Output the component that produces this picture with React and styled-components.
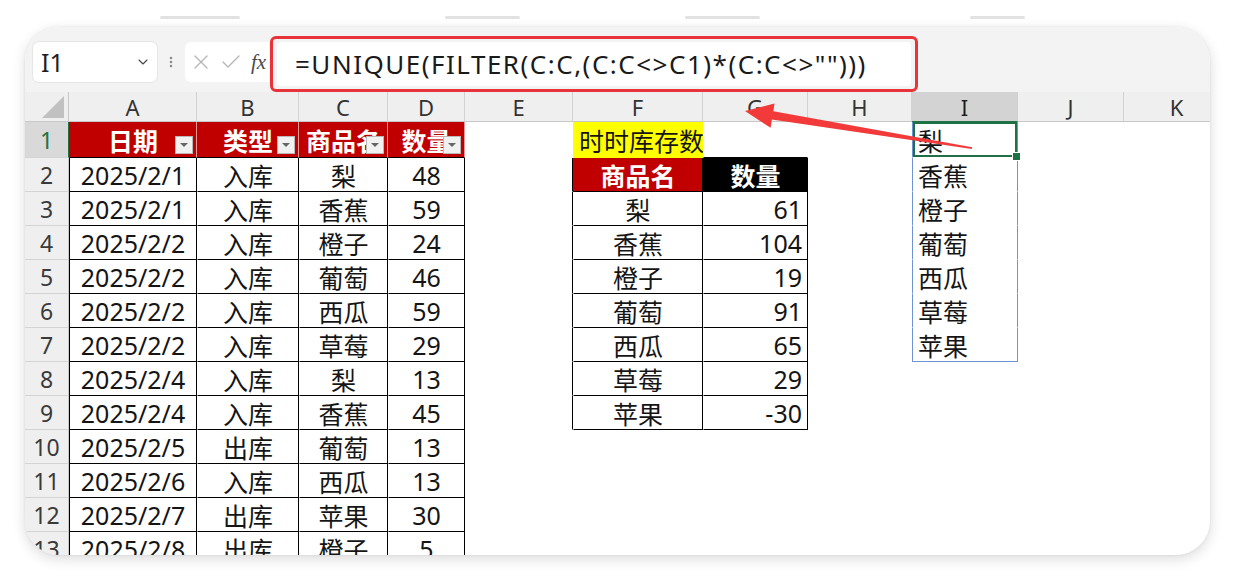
import React from 'react';
import styled, { createGlobalStyle } from 'styled-components';
import { ChevronDown, X, Check, EllipsisVertical } from 'lucide-react';

const GlobalStyle = createGlobalStyle`
  html, body {
    margin: 0;
    padding: 0;
    background: #ffffff;
  }
  body {
    font-family: "Noto Sans", "Noto Sans CJK SC", sans-serif;
  }
`;

const Page = styled.div`
  width: 1235px;
  height: 580px;
  padding: 0 25px;
  box-sizing: border-box;
`;

const TopStrip = styled.div`
  height: 27px;
  display: flex;
  align-items: flex-end;
  padding-bottom: 8px;
  box-sizing: border-box;
`;

const Fragment = styled.div`
  width: ${p => p.$w}px;
  margin-left: ${p => p.$ml}px;
  height: 3px;
  border-radius: 2px;
  background: #e2e2e2;
`;

const Card = styled.div`
  position: relative;
  width: 1185px;
  height: 528px;
  border-radius: 34px;
  overflow: hidden;
  background: #ffffff;
  box-shadow: 0 4px 14px rgba(0, 0, 0, 0.14), 0 0 3px rgba(0, 0, 0, 0.08);
  display: flex;
  flex-direction: column;
`;

const FormulaBar = styled.div`
  height: 65px;
  flex: none;
  display: flex;
  align-items: center;
  padding: 5px 8px 0;
  box-sizing: border-box;
  background: #f3f3f3;
`;

const NameBox = styled.div`
  width: 124px;
  height: 40px;
  box-sizing: border-box;
  background: #ffffff;
  border-radius: 6px;
  box-shadow: 0 0 0 1px #e6e6e6;
  display: flex;
  align-items: center;
  justify-content: space-between;
  padding: 0 6px 0 8px;
  font-size: 25px;
  color: #1f1f1f;
`;

const Dots = styled.div`
  width: 28px;
  display: flex;
  justify-content: center;
  color: #8a8a8a;
`;

const FnBox = styled.div`
  width: 84px;
  height: 40px;
  box-sizing: border-box;
  background: #ffffff;
  border-radius: 6px 0 0 6px;
  display: flex;
  align-items: center;
  gap: 6px;
  padding-left: 4px;
  color: #b4b4b4;
`;

const Fx = styled.span`
  font-family: "Liberation Serif", "DejaVu Serif", serif;
  font-style: italic;
  font-size: 21px;
  color: #4a4a4a;
  margin-left: 2px;
`;

const Highlight = styled.div`
  align-self: flex-end;
  margin-left: 1px;
  width: 648px;
  height: 56px;
  box-sizing: border-box;
  border: 3px solid #e8333a;
  border-radius: 6px;
  padding: 3px 4px;
  background: #f3f3f3;
`;

const FormulaInput = styled.div`
  height: 100%;
  box-sizing: border-box;
  background: #ffffff;
  border-radius: 4px;
  display: flex;
  align-items: center;
  padding-left: 18px;
  font-size: 26px;
  color: #1a1a1a;
  letter-spacing: 1.5px;
  white-space: pre;
`;

const Sheet = styled.div`
  flex: none;
  display: grid;
  grid-template-columns: 44px ${p => p.$cols};
  grid-template-rows: 30px 36px repeat(12, 34px);
`;

const ColHead = styled.div`
  display: flex;
  align-items: center;
  justify-content: center;
  font-size: 22px;
  color: ${p => (p.$active ? '#1f1f1f' : '#333')};
  background: ${p => (p.$active ? '#d3d3d3' : '#efefef')};
  border-right: 1px solid #d2d2d2;
  border-bottom: 1px solid ${p => (p.$active ? '#217346' : '#c8c8c8')};
  box-sizing: border-box;
`;

const Corner = styled.div`
  background: #efefef;
  border-right: 1px solid #c8c8c8;
  border-bottom: 1px solid #c8c8c8;
  box-sizing: border-box;
  display: flex;
  align-items: flex-end;
  justify-content: flex-end;
  padding: 0 4px 3px 0;
`;

const Triangle = styled.div`
  width: 0;
  height: 0;
  border-left: 22px solid transparent;
  border-bottom: 22px solid #c1c1c1;
`;

const RowHead = styled.div`
  display: flex;
  align-items: center;
  justify-content: center;
  font-size: 23px;
  color: ${p => (p.$active ? '#217346' : '#3a3a3a')};
  background: ${p => (p.$active ? '#d9d9d9' : '#efefef')};
  border-right: 1px solid ${p => (p.$active ? '#217346' : '#c8c8c8')};
  border-bottom: 1px solid #d4d4d4;
  box-sizing: border-box;
`;

const Cell = styled.div`
  position: relative;
  display: flex;
  align-items: center;
  justify-content: ${p => p.$align || 'center'};
  padding: 0 5px;
  box-sizing: border-box;
  font-size: 25px;
  white-space: nowrap;
  background: ${p => p.$bg || 'transparent'};
  color: ${p => p.$color || '#151515'};
  font-weight: ${p => (p.$bold ? 700 : 400)};
  border-left: 1px solid ${p => p.$bl || 'transparent'};
  border-right: 1px solid ${p => p.$br || 'transparent'};
  border-bottom: 1px solid ${p => p.$bb || 'transparent'};
  box-shadow: ${p => (p.$active ? 'inset 0 0 0 2px #1e7145' : 'none')};
  z-index: ${p => (p.$active ? 2 : 1)};
`;

const FilterButton = styled.span`
  position: absolute;
  right: 3px;
  bottom: 3px;
  width: 18px;
  height: 18px;
  box-sizing: border-box;
  background: #f1f1f1;
  border: 1px solid #b9b9b9;
  display: flex;
  align-items: center;
  justify-content: center;

  &::after {
    content: '';
    border-left: 4px solid transparent;
    border-right: 4px solid transparent;
    border-top: 4px solid #666;
  }
`;

const Handle = styled.span`
  position: absolute;
  right: -4px;
  bottom: -4px;
  width: 7px;
  height: 7px;
  background: #1e7145;
  border: 1px solid #ffffff;
`;

const ArrowLayer = styled.svg`
  position: absolute;
  left: 0;
  top: 0;
  width: 1185px;
  height: 528px;
  z-index: 5;
  pointer-events: none;
`;

const COLS = [
  ['A', 128], ['B', 102], ['C', 89], ['D', 77], ['E', 108], ['F', 130],
  ['G', 105], ['H', 104], ['I', 106], ['J', 106], ['K', 106]
];

const HEAD = ['日期', '类型', '商品名', '数量'];

const ROWS = [
  ['2025/2/1', '入库', '梨', 48],
  ['2025/2/1', '入库', '香蕉', 59],
  ['2025/2/2', '入库', '橙子', 24],
  ['2025/2/2', '入库', '葡萄', 46],
  ['2025/2/2', '入库', '西瓜', 59],
  ['2025/2/2', '入库', '草莓', 29],
  ['2025/2/4', '入库', '梨', 13],
  ['2025/2/4', '入库', '香蕉', 45],
  ['2025/2/5', '出库', '葡萄', 13],
  ['2025/2/6', '入库', '西瓜', 13],
  ['2025/2/7', '出库', '苹果', 30],
  ['2025/2/8', '出库', '橙子', 5]
];

const STOCK = [
  ['梨', 61], ['香蕉', 104], ['橙子', 19], ['葡萄', 91],
  ['西瓜', 65], ['草莓', 29], ['苹果', -30]
];

const SPILL = ['梨', '香蕉', '橙子', '葡萄', '西瓜', '草莓', '苹果'];

const BLUE = '#6d93d2';

// what each cell holds and how it looks
function cellSpec(col, r) {
  const ci = 'ABCD'.indexOf(col);
  if (ci >= 0) {
    if (r === 1) {
      return {
        text: HEAD[ci], $bg: '#c00000', $color: '#fff', $bold: true,
        $br: 'rgba(255,255,255,0.6)', $bb: '#000', filter: true
      };
    }
    return {
      text: ROWS[r - 2][ci], $br: '#000', $bb: '#000', $bl: ci === 0 ? '#000' : undefined
    };
  }
  if (col === 'E' && r >= 2 && r <= 9) return { $br: '#000' };
  if (col === 'F') {
    if (r === 1) return { text: '时时库存数', $bg: '#ffff00', $align: 'flex-start' };
    if (r === 2) return { text: '商品名', $bg: '#c00000', $color: '#fff', $bold: true, $br: '#000', $bb: '#000' };
    if (r <= 9) return { text: STOCK[r - 3][0], $br: '#000', $bb: '#000' };
  }
  if (col === 'G') {
    if (r === 1) return { $bb: '#000' };
    if (r === 2) return { text: '数量', $bg: '#000', $color: '#fff', $bold: true, $br: '#000', $bb: '#000' };
    if (r <= 9) return { text: STOCK[r - 3][1], $align: 'flex-end', $br: '#000', $bb: '#000' };
  }
  if (col === 'I' && r <= 7) {
    return {
      text: SPILL[r - 1], $align: 'flex-start', $bl: BLUE, $br: BLUE,
      $bb: r === 7 ? BLUE : undefined, $active: r === 1
    };
  }
  return {};
}

function Arrow() {
  // page coordinates, card sits at (25, 27)
  const pts = [
    [745, 111], [774.5, 103.5], [773.4, 111.2], [972.2, 147.3],
    [971.8, 148.9], [771.9, 119.6], [770.6, 127.8]
  ].map(([x, y]) => `${x},${y}`).join(' ');
  return (
    <ArrowLayer viewBox="25 27 1185 528">
      <polygon points={pts} fill="#f23a3a" />
    </ArrowLayer>
  );
}

export default function App() {
  const rowNums = Array.from({ length: 13 }, (_, i) => i + 1);
  return (
    <Page>
      <GlobalStyle />
      <TopStrip>
        <Fragment $ml={135} $w={80} />
        <Fragment $ml={205} $w={75} />
        <Fragment $ml={165} $w={75} />
        <Fragment $ml={210} $w={55} />
      </TopStrip>
      <Card>
        <FormulaBar>
          <NameBox>
            <span>I1</span>
            <ChevronDown size={16} strokeWidth={1.6} color="#444" />
          </NameBox>
          <Dots>
            <EllipsisVertical size={14} strokeWidth={2.4} />
          </Dots>
          <FnBox>
            <X size={24} strokeWidth={1.3} />
            <Check size={24} strokeWidth={1.3} />
            <Fx>fx</Fx>
          </FnBox>
          <Highlight>
            <FormulaInput>{'=UNIQUE(FILTER(C:C,(C:C<>C1)*(C:C<>"")))'}</FormulaInput>
          </Highlight>
        </FormulaBar>
        <Sheet $cols={COLS.map(([, w]) => `${w}px`).join(' ')}>
          <Corner><Triangle /></Corner>
          {COLS.map(([c]) => (
            <ColHead key={c} $active={c === 'I'}>{c}</ColHead>
          ))}
          {rowNums.map(r => (
            <React.Fragment key={r}>
              <RowHead $active={r === 1}>{r}</RowHead>
              {COLS.map(([c]) => {
                const { text, filter, ...look } = cellSpec(c, r);
                return (
                  <Cell key={c} {...look}>
                    {text}
                    {filter && <FilterButton />}
                    {look.$active && <Handle />}
                  </Cell>
                );
              })}
            </React.Fragment>
          ))}
        </Sheet>
        <Arrow />
      </Card>
    </Page>
  );
}
